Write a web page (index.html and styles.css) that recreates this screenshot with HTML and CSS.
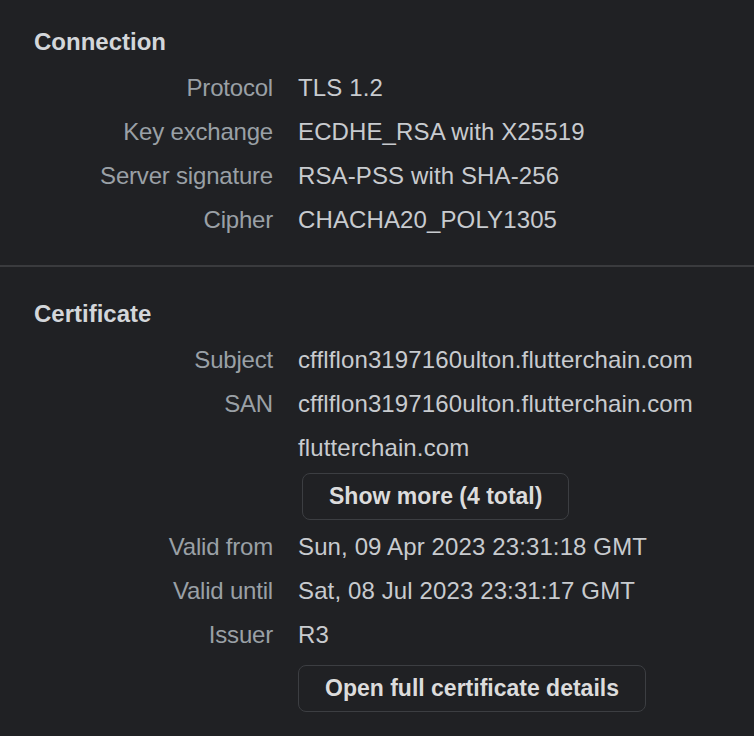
FILE: index.html
```html
<!DOCTYPE html>
<html lang="en">
<head>
<meta charset="utf-8">
<title>Security</title>
<link rel="stylesheet" href="styles.css">
</head>
<body>
<section class="section section-first">
  <h2 class="section-title">Connection</h2>
  <div class="details">
    <div class="row"><div class="key">Protocol</div><div class="value">TLS 1.2</div></div>
    <div class="row"><div class="key">Key exchange</div><div class="value">ECDHE_RSA with X25519</div></div>
    <div class="row"><div class="key">Server signature</div><div class="value">RSA-PSS with SHA-256</div></div>
    <div class="row"><div class="key">Cipher</div><div class="value">CHACHA20_POLY1305</div></div>
  </div>
</section>
<section class="section section-second">
  <h2 class="section-title">Certificate</h2>
  <div class="details">
    <div class="row"><div class="key">Subject</div><div class="value">cfflflon3197160ulton.flutterchain.com</div></div>
    <div class="row"><div class="key">SAN</div><div class="value">cfflflon3197160ulton.flutterchain.com</div></div>
    <div class="row"><div class="key"></div><div class="value">flutterchain.com</div></div>
    <div class="row row-button"><div class="key"></div><div class="value"><button class="btn btn-more" type="button">Show more (4 total)</button></div></div>
    <div class="row"><div class="key">Valid from</div><div class="value">Sun, 09 Apr 2023 23:31:18 GMT</div></div>
    <div class="row"><div class="key">Valid until</div><div class="value">Sat, 08 Jul 2023 23:31:17 GMT</div></div>
    <div class="row"><div class="key">Issuer</div><div class="value">R3</div></div>
    <div class="row row-button row-last"><div class="key"></div><div class="value"><button class="btn btn-open" type="button">Open full certificate details</button></div></div>
  </div>
</section>
</body>
</html>
```
FILE: styles.css
```css
html, body {
  margin: 0;
  padding: 0;
  background: #202124;
}
body {
  font-family: "Liberation Sans", Arial, Helvetica, sans-serif;
  font-size: 24px;
  color: #c4c7cb;
  width: 754px;
  height: 736px;
  overflow: hidden;
}
.section {
  padding: 0 0 0 34px;
}
.section-first {
  padding-top: 28px;
  padding-bottom: 23px;
  border-bottom: 2px solid #3a3b3e;
}
.section-second {
  padding-top: 33px;
}
.section-title {
  margin: 0 0 10px 0;
  font-size: 24px;
  line-height: 28px;
  font-weight: 700;
  color: #d3d6da;
}
.details {
  display: flex;
  flex-direction: column;
}
.row {
  display: flex;
  align-items: center;
  height: 44px;
  line-height: 44px;
  white-space: nowrap;
}
.key {
  width: 239px;
  flex: none;
  text-align: right;
  color: #9aa0a6;
  letter-spacing: -0.2px;
}
.value {
  margin-left: 25px;
  color: #c8cbcf;
  letter-spacing: 0.12px;
}
.row-button {
  height: auto;
  line-height: normal;
  margin: 3px 0 5px 0;
}
.row-last {
  margin-top: 8px;
}
.btn {
  font-family: "Liberation Sans", Arial, Helvetica, sans-serif;
  font-size: 23px;
  font-weight: 700;
  letter-spacing: 0;
  color: #dcdcdc;
  background: #202124;
  border: 1px solid #3c3e42;
  border-radius: 8px;
  height: 47px;
  padding: 0 26px;
  margin: 0;
  cursor: pointer;
}
.btn-more {
  margin-left: 4px;
}
```
